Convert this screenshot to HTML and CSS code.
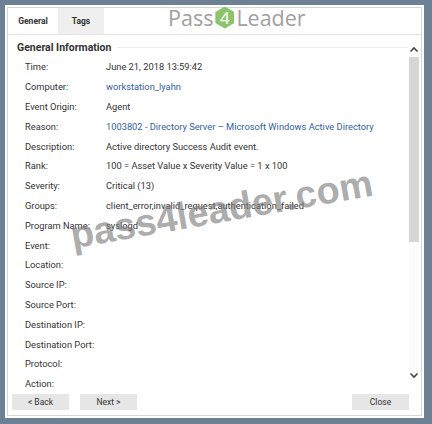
FILE: index.html
```html
<!DOCTYPE html>
<html lang="en">
<head>
    <meta charset="UTF-8">
    <title>Event Details</title>
    <link rel="stylesheet" href="styles.css">
</head>
<body>
    <div class="dialog">
        <div class="frame">
            <div class="tabs">
                <div class="tab active">General</div>
                <div class="tab">Tags</div>
            </div>

            <div class="body">
                <div class="scroll">
                    <h2 class="section-title"><span>General Information</span></h2>
                    <div class="row"><span class="label">Time:</span><span class="value">June 21, 2018 13:59:42</span></div>
                    <div class="row"><span class="label">Computer:</span><span class="value link">workstation_lyahn</span></div>
                    <div class="row"><span class="label">Event Origin:</span><span class="value">Agent</span></div>
                    <div class="row"><span class="label">Reason:</span><span class="value link">1003802 - Directory Server – Microsoft Windows Active Directory</span></div>
                    <div class="row"><span class="label">Description:</span><span class="value">Active directory Success Audit event.</span></div>
                    <div class="row"><span class="label">Rank:</span><span class="value">100 = Asset Value x Severity Value = 1 x 100</span></div>
                    <div class="row"><span class="label">Severity:</span><span class="value">Critical (13)</span></div>
                    <div class="row"><span class="label">Groups:</span><span class="value">client_error,invalid_request,authentication_failed</span></div>
                    <div class="row"><span class="label">Program Name:</span><span class="value">syslogd</span></div>
                    <div class="row"><span class="label">Event:</span><span class="value"></span></div>
                    <div class="row"><span class="label">Location:</span><span class="value"></span></div>
                    <div class="row"><span class="label">Source IP:</span><span class="value"></span></div>
                    <div class="row"><span class="label">Source Port:</span><span class="value"></span></div>
                    <div class="row"><span class="label">Destination IP:</span><span class="value"></span></div>
                    <div class="row"><span class="label">Destination Port:</span><span class="value"></span></div>
                    <div class="row"><span class="label">Protocol:</span><span class="value"></span></div>
                    <div class="row"><span class="label">Action:</span><span class="value"></span></div>
                </div>

                <div class="scrollbar">
                    <svg class="arrow" width="10" height="8" viewBox="0 0 10 8"><path d="M1.5 5.5 L5 2 L8.5 5.5" fill="none" stroke="#444" stroke-width="1.6"/></svg>
                    <div class="track"><div class="thumb"></div></div>
                    <svg class="arrow" width="10" height="8" viewBox="0 0 10 8"><path d="M1.5 2.5 L5 6 L8.5 2.5" fill="none" stroke="#444" stroke-width="1.6"/></svg>
                </div>
            </div>

            <div class="footer">
                <button class="btn">&lt; Back</button>
                <button class="btn">Next &gt;</button>
                <span class="spacer"></span>
                <button class="btn">Close</button>
            </div>
        </div>
    </div>

    <!-- watermarks laid over the screenshot -->
    <div class="brand">Pass<span class="hex">4</span>Leader</div>
    <div class="stamp">pass4leader.com</div>
</body>
</html>
```

FILE: styles.css
```css
body {
    margin: 0;
    padding: 5px 8px 6px 5px;
    background: #6d8094;
    font-family: Roboto, 'Liberation Sans', sans-serif;
    color: #333;
    position: relative;
    height: 413px;
}

.dialog {
    background: #fff;
    padding: 2px;
    height: 409px;
}

.frame {
    border: 1px solid #d6d6d6;
    height: 407px;
    display: flex;
    flex-direction: column;
}

/* Tabs */
.tabs {
    display: flex;
    height: 26px;
    border-bottom: 1px solid #e2e2e2;
}

.tab {
    font-size: 8.5px;
    font-weight: bold;
    color: #333;
    display: flex;
    align-items: center;
    justify-content: center;
    background: #efefef;
    width: 46px;
}

.tab.active {
    background: #fff;
    width: 50px;
}

/* Body */
.body {
    flex: 1;
    display: flex;
    overflow: hidden;
}

.scroll {
    flex: 1;
    overflow: hidden;
    padding: 5px 0 0 9px;
}

.section-title {
    margin: 0;
    font-size: 10.5px;
    font-weight: bold;
    color: #333;
    height: 14px;
    display: flex;
    align-items: center;
    gap: 6px;
    margin-bottom: 3px;
}

.section-title::after {
    content: "";
    flex: 1;
    border-top: 1px solid #ececec;
}

.row {
    display: flex;
    height: 19.8px;
    align-items: center;
    font-size: 9.3px;
    padding-left: 8px;
}

.label {
    width: 81px;
    flex-shrink: 0;
}

.value {
    white-space: nowrap;
}

.link {
    color: #33609f;
}

/* Scrollbar */
.scrollbar {
    width: 12px;
    margin-right: 1px;
    display: flex;
    flex-direction: column;
    align-items: center;
    padding: 9px 0 10px;
}

.arrow {
    margin: 2px 0 3px;
}

.track {
    flex: 1;
    width: 10px;
    background: #fbfafc;
}

.thumb {
    height: 185px;
    background: #d6d6d6;
}

/* Footer */
.footer {
    display: flex;
    gap: 11px;
    padding: 2px 12px 5px 4px;
}

.spacer {
    flex: 1;
}

.btn {
    width: 57px;
    height: 16px;
    border: none;
    background: #e6e6e6;
    font-family: Roboto, 'Liberation Sans', sans-serif;
    font-size: 8.5px;
    color: #333;
    padding: 0;
}

/* Watermarks */
.brand {
    position: absolute;
    top: 3px;
    left: 168px;
    font-family: 'Open Sans', sans-serif;
    font-size: 21.5px;
    color: #a0a0a0;
    display: flex;
    align-items: center;
}

.hex {
    width: 19px;
    height: 22px;
    margin: 0 2px;
    background: #8cc46c;
    color: #fff;
    clip-path: polygon(50% 0, 100% 25%, 100% 75%, 50% 100%, 0 75%, 0 25%);
    display: flex;
    align-items: center;
    justify-content: center;
    font-size: 17px;
}

.stamp {
    position: absolute;
    top: 215px;
    left: 67px;
    font-family: 'Liberation Sans', sans-serif;
    font-weight: bold;
    font-size: 38px;
    color: rgba(125, 125, 125, 0.65);
    transform: rotate(-10deg);
    transform-origin: left top;
    white-space: nowrap;
}
```
